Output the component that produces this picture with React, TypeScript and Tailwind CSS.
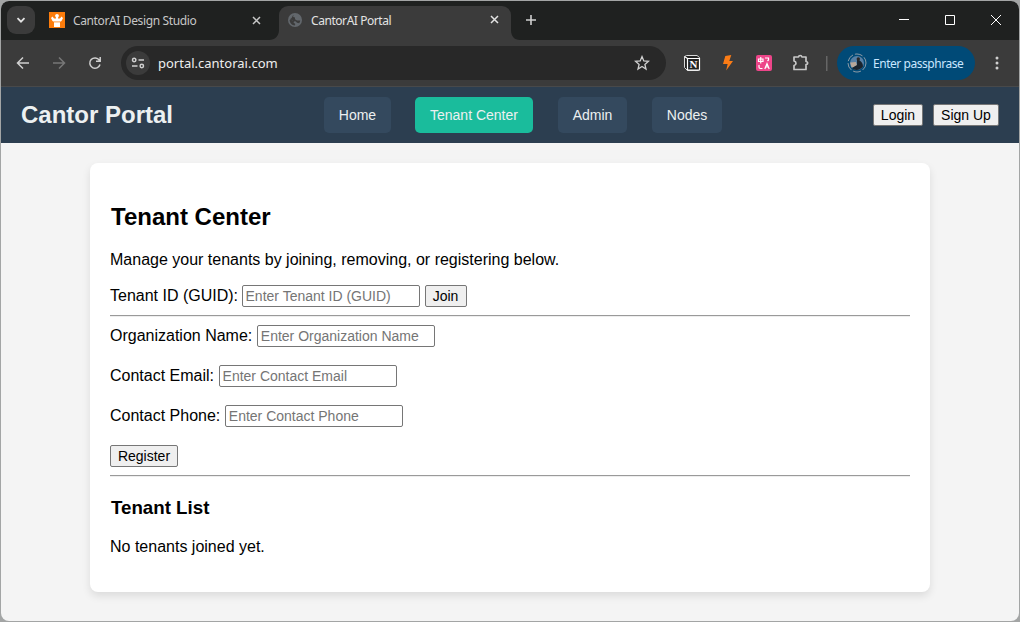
import React from 'react';

const ico = { fill: 'none', stroke: 'currentColor', strokeWidth: 1.5 } as const;

function TabStrip() {
  return (
    <div className="relative flex h-[39px] shrink-0 bg-[#1f2120] font-['Noto_Sans',sans-serif] text-[12px]">
      <button className="ml-[6px] mt-[5px] flex size-7 shrink-0 items-center justify-center rounded-[9px] bg-[#3b3b3b] text-[#e3e3e3]">
        <svg width="10" height="10" viewBox="0 0 10 10" {...ico} strokeWidth={1.8}><path d="M1.5 3.2 5 6.7 8.5 3.2" /></svg>
      </button>
      <div className="ml-[14px] flex h-[38px] w-[230px] shrink-0 items-center text-[#c7c7c7]">
        <svg width="16" height="16" viewBox="0 0 16 16" className="shrink-0">
          <path fill="#fb7c0c" d="M0 0h16v16H0z" />
          <path fill="#fff" d="M5 10h6v5H5zM2 6l1.500-1.500L5 6.500h6l1.500-2L14 6l-1.500 3-2 1h-5l-2-1z" />
          <circle cx="8" cy="3.800" r="1.900" fill="#fff" />
          <path fill="#fff" d="M7 5h2v2H7z" /><path stroke="#fb7c0c" strokeWidth=".8" d="M5 9.900h6" />
        </svg>
        <span className="ml-2 w-[179px] whitespace-nowrap pt-px tracking-[-0.37px]">CantorAI Design Studio</span>
        <svg width="9" height="9" viewBox="0 0 9 9" {...ico}><path d="m1 1 7 7M8 1 1 8" /></svg>
      </div>
      <div className="flex h-[34px] w-[232px] shrink-0 items-center self-end rounded-t-[9px] bg-[#3b3b3b] pb-[7px] pl-[9px] text-[#e3e3e3]">
        <svg width="14" height="14" viewBox="0 0 14 14" className="shrink-0">
          <circle cx="7" cy="7" r="7" fill="#62676c" />
          <path fill="#3b3b3b" d="M7.500 1.500c-2 .3-2.700 1.500-2.200 2.500L7 4.500v1.700L9 7.500h3.300c-.1 1-.5 2-1.200 2.700L9 9.700 7.500 8.200 5.300 8 4 6.700 1.600 7c.1 3 2.400 5.300 5.200 5.400l.5-1.300-1.800-1.500.6-1.300L3 6.800 1.600 6.500l2-1.500 1.300-2.500z" />
        </svg>
        <span className="ml-[9px] w-[179px] whitespace-nowrap pt-[2px] tracking-[-0.44px]">CantorAI Portal</span>
        <svg width="9" height="9" viewBox="0 0 9 9" {...ico}><path d="m1 1 7 7M8 1 1 8" /></svg>
      </div>
      <svg width="509" height="39" viewBox="511 0 509 39" className="absolute left-[510px] top-0">
        <path fill="#3b3b3b" d="M511 29c0 6 3 10 9 10h-9z" />
        <path stroke="#d0d0d0" strokeWidth="1.600" d="M526 19h10M531 14v10" />
        <g fill="none" stroke="#fff"><path d="M899 18.500h10" /><path d="M945.500 14.500h9v9h-9z" /><path d="m991 14 10 10M1001 14l-10 10" /></g>
      </svg>
      <svg width="10" height="10" viewBox="0 0 10 10" className="absolute bottom-0 left-[268px]"><path fill="#3b3b3b" d="M10 0c0 6-4 10-10 10h10z" /></svg>
    </div>
  );
}

function Toolbar() {
  return (
    <div className="flex h-[46px] shrink-0 items-center bg-[#3b3b3b] font-['Noto_Sans',sans-serif] text-[#d0d0d0]">
      <svg width="120" height="46" viewBox="1 40 120 46" {...ico} className="shrink-0">
        <path d="M29 63H17.800M23 57.500 17.500 63l5.500 5.500" />
        <path stroke="#777" d="M53 63h11.200M59 57.500l5.500 5.500-5.500 5.500" />
        <path d="M99.300 60.200A5.200 5.200 0 1 0 100 64.500M100.200 57v4.200H96" />
      </svg>
      <div className="flex h-[34px] w-[545px] shrink-0 items-center rounded-full bg-[#282828] pl-[5px]">
        <span className="flex size-6 shrink-0 items-center justify-center rounded-full bg-[#3b3b3b]">
          <svg width="14" height="14" viewBox="0 0 14 14" {...ico}><circle cx="3.200" cy="4" r="1.700" /><path d="M7.500 4H13M1 10h5.500" /><circle cx="10.800" cy="10" r="1.700" /></svg>
        </span>
        <span className="ml-2 w-[476px] pt-px text-[13px] text-[#eee]">portal.cantorai.com</span>
        <svg width="16" height="16" viewBox="0 0 16 16" {...ico} strokeWidth={1.300}><path d="m8 1.600 1.800 4.300 4.700.4-3.600 3.100 1.100 4.600-4-2.500L4 14l1.100-4.600-3.600-3.100 4.700-.4z" /></svg>
      </div>
      <svg width="171" height="46" viewBox="666 40 171 46" className="shrink-0">
        <path fill="#222" stroke="#d8d8d8" strokeWidth="1" d="m684.500 56.500 2-1h10.500l2.500 2v12l-1 1h-11l-3-3z" />
        <path fill="#222" stroke="#fff" strokeWidth="1.200" d="M687.500 58.500h12v11.500h-12zM684.500 56.500l3 2" />
        <text x="689.400" y="68" fill="#fff" fontFamily="Liberation Serif" fontWeight="700" fontSize="11">N</text>
        <path fill="#fb7c16" d="m725.300 56 6-1-2 6h3.700l-6.800 9.500 1.400-6.500H723z" />
        <rect x="756" y="55" width="16" height="16" rx="2" fill="#ed4589" />
        <g fill="none" stroke="#fff" strokeWidth="1.200"><path d="M758.500 59h4.500v2.500h-4.500zM760.750 57v6.500M765 58h3.500v2l-1 1M759 65v2q0 1.500 1.500 1.500h2M764.800 69l2.200-5.500 2.200 5.500M765.700 67h2.800" /></g>
        <path fill="none" stroke="#c7c7c7" strokeWidth="1.700" strokeLinejoin="round" d="M794 57h4.500q.2-1.500 1.700-1.500t1.700 1.500h4.100v4.500q1.700.1 1.700 1.500t-1.700 1.500V69.500h-12v-4q2-.4 2-2.250t-2-2.250z" />
        <path fill="#666" d="M826 56h1.500v15H826z" />
      </svg>
      <div className="flex h-[34px] w-[138px] shrink-0 items-center rounded-full bg-[#004a77] pl-[10px] text-[12px] text-[#c9e7ff]">
        <svg width="20" height="20" viewBox="0 0 20 20" className="shrink-0">
          <circle cx="10" cy="10" r="9" fill="none" stroke="#8c9ba6" strokeWidth="1" strokeDasharray="8 2" />
          <circle cx="10" cy="10" r="7" fill="#5680a6" /><path fill="#b8a79a" d="M3.200 9.500 9 9l1 4-5.500 1.500z" />
          <path fill="#1a242e" d="M10 7h2c3 2 4 4 4 6.500C13.500 17 8 18.500 5 15l5-3z" /><circle cx="11.300" cy="6" r="1.700" fill="#2b2928" />
        </svg>
        <span className="ml-[6px] whitespace-nowrap pt-px tracking-[-0.46px]">Enter passphrase</span>
      </div>
      <svg width="44" height="46" viewBox="975 40 44 46" fill="#d0d0d0"><circle cx="997" cy="58" r="1.500" /><circle cx="997" cy="63" r="1.500" /><circle cx="997" cy="68" r="1.500" /></svg>
    </div>
  );
}

function Button({ children, className }: { children: string; className: string }) {
  return <button className={`h-[22px] shrink-0 rounded-[2px] border border-[#767676] bg-[#efefef] text-center text-[14px] leading-[20px] text-black ${className}`}>{children}</button>;
}

function NavItem({ children, className }: { children: string; className: string }) {
  return <a className={`flex h-9 items-center justify-center rounded-[5px] pt-px text-[14px] text-[#ecf0f1] ${className}`}>{children}</a>;
}

function Field({ label, placeholder, inputClass = 'ml-[4.5px]' }: { label: string; placeholder: string; inputClass?: string }) {
  return (
    <>
      <label className="leading-[18px]">{label}</label>
      <input placeholder={placeholder} className={`h-[22px] w-[178px] rounded-[2px] border border-[#767676] bg-white px-[3px] text-[14px] leading-[18px] placeholder:text-[#757575] ${inputClass}`} />
    </>
  );
}

export default function App() {
  return (
    <div className="h-[622px] w-[1020px] overflow-hidden bg-[#a3a5a5] p-px font-['Liberation_Sans',Arial,sans-serif] text-base text-black">
      <div className="flex h-[620px] w-[1018px] flex-col overflow-hidden rounded-[8px] bg-[#f4f4f4]">
        <TabStrip />
        <Toolbar />
        <div className="h-px shrink-0 bg-[#48494a]" />
        <header className="flex h-14 shrink-0 items-center bg-[#2c3e50]">
          <h1 className="ml-5 w-[303px] text-[24px] font-bold leading-7 text-[#ecf0f1]">Cantor Portal</h1>
          <nav className="flex w-[549px]">
            <NavItem className="w-[67px] bg-[#34495e]">Home</NavItem>
            <NavItem className="ml-6 w-[118px] bg-[#1abc9c]">Tenant Center</NavItem>
            <NavItem className="ml-[25px] w-[69px] bg-[#34495e]">Admin</NavItem>
            <NavItem className="ml-[25px] w-[70px] bg-[#34495e]">Nodes</NavItem>
          </nav>
          <Button className="w-[50px]">Login</Button>
          <Button className="ml-[10px] w-[66px]">Sign Up</Button>
        </header>
        <main className="ml-[89px] mt-5 h-[429px] w-[840px] shrink-0 rounded-[8px] bg-white px-5 pt-10 shadow-[0_4px_8px_rgba(0,0,0,0.1)]">
          <h2 className="pl-px text-[24px] font-bold leading-7">Tenant Center</h2>
          <p className="mt-5 leading-[18px]">Manage your tenants by joining, removing, or registering below.</p>
          <div className="mt-4 flex h-[22px] items-center">
            <Field label="Tenant ID (GUID):" placeholder="Enter Tenant ID (GUID)" inputClass="ml-[3.5px]" />
            <Button className="ml-[5px] w-[42px]">Join</Button>
          </div>
          <hr className="mt-2 h-[2px] border-0 border-t border-[#9a9a9a] bg-[#eeeeee]" />
          <div className="mt-2 flex h-[22px] items-center"><Field label="Organization Name:" placeholder="Enter Organization Name" /></div>
          <div className="mt-[18px] flex h-[22px] items-center"><Field label="Contact Email:" placeholder="Enter Contact Email" /></div>
          <div className="mt-[18px] flex h-[22px] items-center"><Field label="Contact Phone:" placeholder="Enter Contact Phone" /></div>
          <Button className="mt-[18px] block w-[68px]">Register</Button>
          <hr className="mt-2 h-[2px] border-0 border-t border-[#9a9a9a] bg-[#eeeeee]" />
          <h3 className="mt-5 pl-px text-[18.72px] font-bold leading-[21px]">Tenant List</h3>
          <p className="mt-5 leading-[18px]">No tenants joined yet.</p>
        </main>
      </div>
    </div>
  );
}
